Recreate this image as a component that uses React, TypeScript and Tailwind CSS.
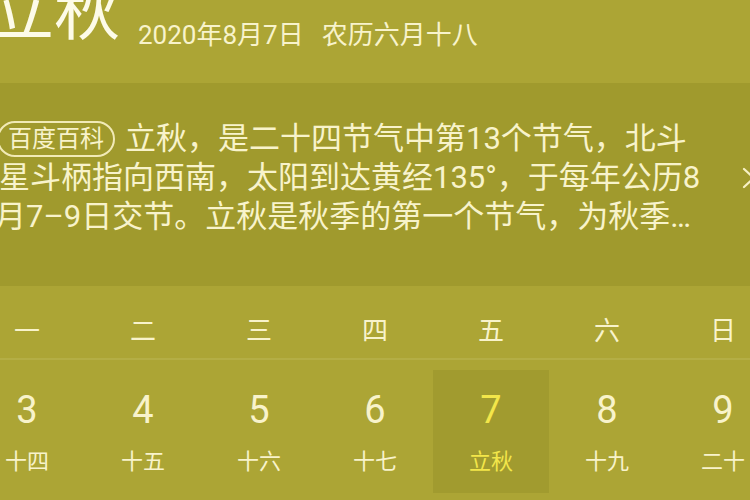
import React from "react";

const font = { fontFamily: '"Roboto", "Noto Sans CJK SC", sans-serif' };

const days = [
  { n: "3", l: "十四" },
  { n: "4", l: "十五" },
  { n: "5", l: "十六" },
  { n: "6", l: "十七" },
  { n: "7", l: "立秋", active: true },
  { n: "8", l: "十九" },
  { n: "9", l: "二十" },
];

const weekdays = ["一", "二", "三", "四", "五", "六", "日"];

function Chevron() {
  return (
    <svg viewBox="0 0 20 24" className="h-[24px] w-[20px] shrink-0" fill="none" stroke="#f7f1c4" strokeWidth={2.2}>
      <polyline points="4,3 14,12 4,21" strokeLinecap="round" strokeLinejoin="round" />
    </svg>
  );
}

export default function App() {
  return (
    <div className="h-[500px] w-[750px] overflow-hidden bg-[#aca535] text-[#f8f3cb]" style={font}>
      {/* header */}
      <div className="flex h-[83px] items-start">
        <div className="-ml-[12px] -mt-[21px] text-[66px] leading-none text-[#fdfbe8]">立秋</div>
        <div className="ml-[18px] mt-[22px] flex gap-[18px] text-[26px] leading-none">
          <span>2020年8月7日</span>
          <span>农历六月十八</span>
        </div>
      </div>

      {/* baike panel */}
      <div className="flex h-[203px] items-center bg-[#a09a2d] pb-[14px]">
        <div className="flex flex-col text-[31px] leading-[39px] whitespace-nowrap">
          <div className="flex items-center">
            <span className="-ml-[3px] mr-[10px] rounded-full border-2 border-[#f1eab6] px-[9px] text-[24px] leading-[32px]">
              百度百科
            </span>
            <span>立秋，是二十四节气中第13个节气，北斗</span>
          </div>
          <div className="-ml-[1px]">星斗柄指向西南，太阳到达黄经135°，于每年公历8</div>
          <div className="-ml-[5px]">月7–9日交节。立秋是秋季的第一个节气，为秋季…</div>
        </div>
        <div className="ml-auto -mr-[10px] flex items-center">
          <Chevron />
        </div>
      </div>

      {/* calendar */}
      <div className="-ml-[31px] flex h-[72px] items-center pt-[18px]">
        {weekdays.map((w) => (
          <div key={w} className="flex w-[116px] shrink-0 justify-center text-[26px] leading-none">
            {w}
          </div>
        ))}
      </div>
      <div className="h-[2px] bg-[#b4ae45]" />
      <div className="-ml-[31px] flex pt-[10px]">
        {days.map((d) => (
          <div
            key={d.n}
            className={
              "flex h-[123px] w-[116px] shrink-0 flex-col items-center pt-[20px] " +
              (d.active ? "bg-[#a19b2f] text-[#f3e64a]" : "")
            }
          >
            <span className="text-[38px] leading-[40px]">{d.n}</span>
            <span className="mt-[20px] text-[22px] leading-[24px]">{d.l}</span>
          </div>
        ))}
      </div>
    </div>
  );
}
